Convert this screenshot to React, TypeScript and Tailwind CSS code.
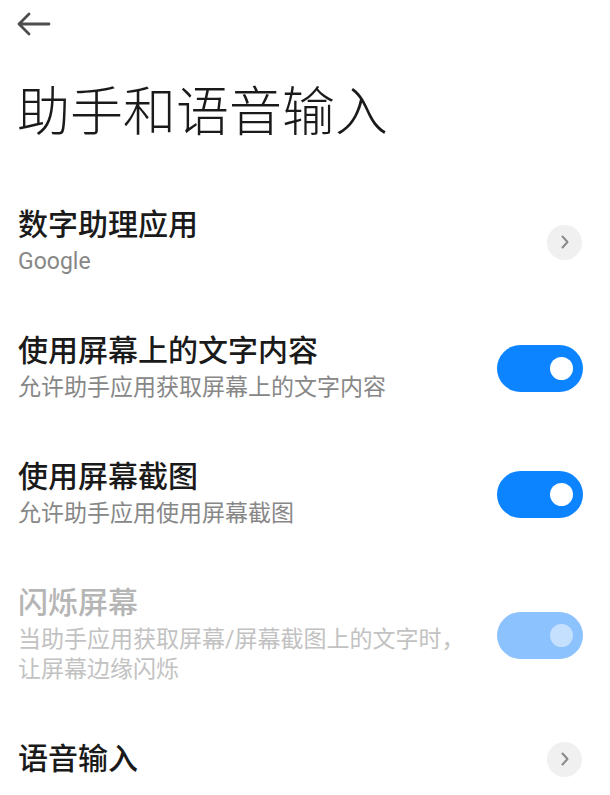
import React from 'react';

const FONT = { fontFamily: 'Roboto, "Noto Sans CJK SC", sans-serif' };

function Toggle({ disabled }: { disabled?: boolean }) {
  return (
    <div
      className={`flex h-[47px] w-[86px] shrink-0 items-center justify-end rounded-full pr-[10px] ${
        disabled ? 'bg-[#8cc2fd]' : 'bg-[#0d84ff]'
      }`}
    >
      <div className={`h-[23px] w-[23px] rounded-full ${disabled ? 'bg-[#c5e0fe]' : 'bg-white'}`} />
    </div>
  );
}

function Chevron() {
  return (
    <div className="mr-[1px] flex h-[35px] w-[35px] shrink-0 items-center justify-center rounded-full bg-[#f0f0f0]">
      <svg width="10" height="16" viewBox="0 0 10 16" fill="none">
        <path d="M2.5 2.5L7.5 8L2.5 13.5" stroke="#8a8a8a" strokeWidth="2" strokeLinecap="round" strokeLinejoin="round" />
      </svg>
    </div>
  );
}

type Row = {
  title: string;
  lines?: string[];
  right: 'chevron' | 'toggle';
  disabled?: boolean;
};

const ROWS: Row[] = [
  { title: '数字助理应用', lines: ['Google'], right: 'chevron' },
  { title: '使用屏幕上的文字内容', lines: ['允许助手应用获取屏幕上的文字内容'], right: 'toggle' },
  { title: '使用屏幕截图', lines: ['允许助手应用使用屏幕截图'], right: 'toggle' },
  {
    title: '闪烁屏幕',
    lines: ['当助手应用获取屏幕/屏幕截图上的文字时，', '让屏幕边缘闪烁'],
    right: 'toggle',
    disabled: true,
  },
  { title: '语音输入', right: 'chevron' },
];

export default function App() {
  return (
    <div className="h-[795px] w-[610px] overflow-hidden bg-white" style={FONT}>
      {/* back */}
      <header className="flex h-[50px] items-center pl-[16px]">
        <svg width="36" height="26" viewBox="0 0 36 26" fill="none">
          <path d="M3 12H33M13 2L3 12L13 22" stroke="#4d4d4d" strokeWidth="2.8" strokeLinecap="round" strokeLinejoin="round" />
        </svg>
      </header>

      <h1 className="mt-[33px] pl-[17px] text-[53px] font-light leading-[60px] text-[#1a1a1a]">助手和语音输入</h1>

      <main className="mt-[36px] flex flex-col">
        {ROWS.map((row) => (
          <div key={row.title} className="flex items-center justify-between py-[28px] pl-[18px] pr-[27px]">
            <div className="flex flex-col gap-1">
              <div
                className={`text-[30px] font-medium leading-[36px] ${
                  row.disabled ? 'text-[#b5b5b5]' : 'text-[#1a1a1a]'
                }`}
              >
                {row.title}
              </div>
              {row.lines && (
                <div className={`text-[23px] leading-[30px] ${row.disabled ? 'text-[#c2c2c2]' : 'text-[#878787]'}`}>
                  {row.lines.map((l) => (
                    <div key={l}>{l}</div>
                  ))}
                </div>
              )}
            </div>
            {row.right === 'toggle' ? <Toggle disabled={row.disabled} /> : <Chevron />}
          </div>
        ))}
      </main>
    </div>
  );
}
